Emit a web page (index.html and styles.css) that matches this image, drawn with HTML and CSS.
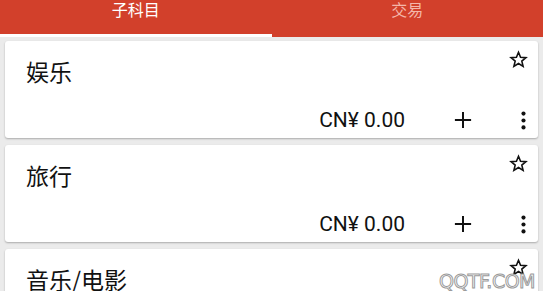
FILE: index.html
```html
<!DOCTYPE html>
<html lang="zh">
<head>
<meta charset="utf-8">
<link rel="stylesheet" href="styles.css">
</head>
<body>
<div class="app">
  <header class="tabs">
    <div class="tab active">子科目</div>
    <div class="tab">交易</div>
  </header>
  <main class="list">
    <section class="card">
      <div class="card-top">
        <div class="title">娱乐</div>
        <svg class="star" viewBox="0 0 24 24"><path d="M12 2.8l2.6 6.3 6.8.5-5.2 4.4 1.6 6.6L12 17l-5.8 3.6 1.6-6.6-5.2-4.4 6.8-.5z" fill="none" stroke="#111" stroke-width="2" stroke-linejoin="miter"/></svg>
      </div>
      <div class="card-bottom">
        <span class="amount">CN¥ 0.00</span>
        <svg class="plus" viewBox="0 0 20 20"><path d="M10 1v18M1 10h18" stroke="#111" stroke-width="2.2"/></svg>
        <svg class="dots" viewBox="0 0 8 22"><circle cx="4" cy="3" r="2.4"/><circle cx="4" cy="11" r="2.4"/><circle cx="4" cy="19" r="2.4"/></svg>
      </div>
    </section>
    <section class="card">
      <div class="card-top">
        <div class="title">旅行</div>
        <svg class="star" viewBox="0 0 24 24"><path d="M12 2.8l2.6 6.3 6.8.5-5.2 4.4 1.6 6.6L12 17l-5.8 3.6 1.6-6.6-5.2-4.4 6.8-.5z" fill="none" stroke="#111" stroke-width="2" stroke-linejoin="miter"/></svg>
      </div>
      <div class="card-bottom">
        <span class="amount">CN¥ 0.00</span>
        <svg class="plus" viewBox="0 0 20 20"><path d="M10 1v18M1 10h18" stroke="#111" stroke-width="2.2"/></svg>
        <svg class="dots" viewBox="0 0 8 22"><circle cx="4" cy="3" r="2.4"/><circle cx="4" cy="11" r="2.4"/><circle cx="4" cy="19" r="2.4"/></svg>
      </div>
    </section>
    <section class="card">
      <div class="card-top">
        <div class="title">音乐/电影</div>
        <svg class="star" viewBox="0 0 24 24"><path d="M12 2.8l2.6 6.3 6.8.5-5.2 4.4 1.6 6.6L12 17l-5.8 3.6 1.6-6.6-5.2-4.4 6.8-.5z" fill="none" stroke="#111" stroke-width="2" stroke-linejoin="miter"/></svg>
      </div>
      <div class="card-bottom">
        <span class="amount">CN¥ 0.00</span>
        <svg class="plus" viewBox="0 0 20 20"><path d="M10 1v18M1 10h18" stroke="#111" stroke-width="2.2"/></svg>
        <svg class="dots" viewBox="0 0 8 22"><circle cx="4" cy="3" r="2.4"/><circle cx="4" cy="11" r="2.4"/><circle cx="4" cy="19" r="2.4"/></svg>
      </div>
    </section>
  </main>
  <div class="watermark">QQTF.COM</div>
</div>
</body>
</html>
```
FILE: styles.css
```css
html, body {
  margin: 0;
  padding: 0;
}
body {
  width: 543px;
  height: 291px;
  overflow: hidden;
  background: #ebebeb;
  font-family: "Noto Sans CJK SC", Roboto, sans-serif;
}
.app {
  position: relative;
  height: 291px;
  overflow: hidden;
}
.tabs {
  display: grid;
  grid-template-columns: 1fr 1fr;
  height: 37px;
  background: #d2402b;
}
.tab {
  display: flex;
  justify-content: center;
  align-items: flex-start;
  font-size: 16px;
  line-height: 19px;
  color: #f4b6a9;
  box-sizing: border-box;
}
.tab.active {
  color: #ffffff;
  border-bottom: 3px solid #ffffff;
}
.list {
  display: flex;
  flex-direction: column;
  gap: 7px;
  padding: 4px 5px 0 5px;
}
.card {
  display: flex;
  flex-direction: column;
  height: 97px;
  flex-shrink: 0;
  background: #ffffff;
  border-radius: 3px;
  box-shadow: 0 1px 2px rgba(0, 0, 0, 0.28);
}
.card-top {
  display: flex;
  justify-content: space-between;
  align-items: flex-start;
}
.title {
  padding: 15px 0 0 21px;
  font-size: 23px;
  line-height: 31px;
  color: #111111;
}
.star {
  width: 19px;
  height: 19px;
  margin: 9px 10px 0 0;
}
.card-bottom {
  margin-top: auto;
  display: flex;
  justify-content: flex-end;
  align-items: center;
  height: 36px;
}
.amount {
  font-family: Roboto, "Noto Sans CJK SC", sans-serif;
  font-size: 21px;
  color: #111111;
  margin-right: 49px;
}
.plus {
  width: 18px;
  height: 18px;
  margin-right: 48px;
}
.dots {
  width: 7px;
  height: 19px;
  fill: #111111;
  margin-right: 11px;
}
.watermark {
  position: absolute;
  right: 8px;
  bottom: 0;
  font-family: "DejaVu Sans", sans-serif;
  font-size: 19px;
  line-height: 20px;
  letter-spacing: -0.5px;
  color: #ffffff;
  -webkit-text-stroke: 1px #9a9a9a;
}
```
